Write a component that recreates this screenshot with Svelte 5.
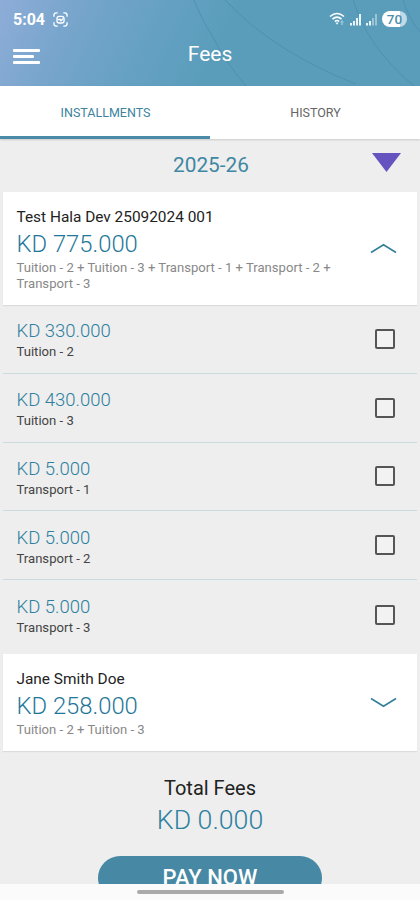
<script lang="ts">
	interface Installment {
		amount: string;
		label: string;
		selected: boolean;
	}

	let year = $state('2025-26');
	let activeTab = $state('Installments');
	let expanded = $state(true);

	const tabs = ['Installments', 'History'];

	let installments: Installment[] = $state([
		{ amount: '330.000', label: 'Tuition - 2', selected: false },
		{ amount: '430.000', label: 'Tuition - 3', selected: false },
		{ amount: '5.000', label: 'Transport - 1', selected: false },
		{ amount: '5.000', label: 'Transport - 2', selected: false },
		{ amount: '5.000', label: 'Transport - 3', selected: false }
	]);

	const total = $derived(
		installments.reduce((sum, i) => sum + (i.selected ? Number(i.amount) : 0), 0)
	);
</script>

<div class="screen">
	<header>
		<svg class="arcs" viewBox="0 0 420 86" aria-hidden="true">
			<path d="M194 0 Q204 24 210 32 Q228 66 246 86" />
			<path d="M225 0 Q274 52 356 84" />
			<path d="M353 0 Q368 48 414 86" />
			<path d="M403 0 Q409 19 420 32" />
		</svg>
		<div class="status">
			<span class="clock">5:04</span>
			<svg class="capture" width="15" height="15" viewBox="0 0 16 16">
				<path d="M1 5V3.500Q1 1 3.500 1H5M11 1h1.500Q15 1 15 3.500V5M15 11v1.500Q15 15 12.500 15H11M5 15H3.500Q1 15 1 12.500V11" />
				<rect x="4.200" y="4.700" width="7.600" height="7" rx="2.500" />
				<path d="M5 8h2.500l1 1.300L11 7" />
			</svg>
			<div class="signals">
				<svg width="17" height="14" viewBox="0 0 17 14">
					<path class="wave" d="M1 4.500Q8 -1.500 15 4.500M3.500 7.200Q8 3 12.500 7.200M5.800 9.500Q8 7.500 10.200 9.500" />
					<path class="solid" d="M6.300 10.500h3.400L8 12.800z" />
					<path class="solid dim" d="M13 8l2 2.500h-1.200V13h-1.600v-2.500H11z" />
				</svg>
				<svg width="12" height="13" viewBox="0 0 12 13">
					<path class="solid" d="M0 10h2v2.500H0zM3 8h2v4.500H3zM6 5h2v7.500H6zM9 1h2v11.500H9z" />
				</svg>
				<svg width="12" height="13" viewBox="0 0 12 13">
					<path class="solid" d="M0 10h2v2.500H0zM3 8h2v4.500H3z" />
					<path class="solid dim" d="M6 5h2v7.500H6zM9 1h2v11.500H9z" />
				</svg>
				<span class="battery">70</span>
			</div>
		</div>
		<div class="title-bar">
			<button class="menu" aria-label="Menu">
				<i></i>
				<i class="short"></i>
				<i></i>
			</button>
			<h1>Fees</h1>
		</div>
	</header>

	<nav>
		{#each tabs as tab}
			<button class:active={activeTab === tab} onclick={() => (activeTab = tab)}>{tab}</button>
		{/each}
	</nav>

	<main>
		<div class="year">
			<span>{year}</span>
			<svg width="29" height="19" viewBox="0 0 29 19">
				<path d="M0 0h29L14.500 19z" />
			</svg>
		</div>

		<section class="card first">
			<div class="info">
				<div class="name">Test Hala Dev 25092024 001</div>
				<div class="sum">KD 775.000</div>
				<p>Tuition - 2 + Tuition - 3 + Transport - 1 + Transport - 2 + Transport - 3</p>
			</div>
			<button class="toggle" aria-label="Toggle installments" onclick={() => (expanded = !expanded)}>
				<svg width="27" height="11" viewBox="0 0 27 11"><path d="M1 9.500L13.500 1.800L26 9.500" /></svg>
			</button>
		</section>

		{#if expanded}
			<ul>
				{#each installments as item}
					<li>
						<div>
							<div class="amount">KD {item.amount}</div>
							<div class="label">{item.label}</div>
						</div>
						<input type="checkbox" bind:checked={item.selected} aria-label={item.label} />
					</li>
				{/each}
			</ul>
		{/if}

		<section class="card second">
			<div class="info">
				<div class="name">Jane Smith Doe</div>
				<div class="sum">KD 258.000</div>
				<p>Tuition - 2 + Tuition - 3</p>
			</div>
			<button class="toggle" aria-label="Toggle installments">
				<svg width="27" height="11" viewBox="0 0 27 11"><path d="M1 1.500L13.500 9.200L26 1.500" /></svg>
			</button>
		</section>

		<div class="total">
			<div class="total-label">Total Fees</div>
			<div class="total-sum">KD {total.toFixed(3)}</div>
			<button class="pay">PAY NOW</button>
		</div>
	</main>

	<footer><i></i></footer>
</div>

<style>
	:global(body) {
		background: #eee;
	}
	.screen {
		display: flex;
		flex-direction: column;
		width: 420px;
		height: 900px;
		overflow: hidden;
		background: #eeeeee;
		font-family: Roboto, 'Liberation Sans', sans-serif;
		color: #222;
	}
	button {
		padding: 0;
		border: 0;
		background: none;
		font: inherit;
		color: inherit;
	}
	svg {
		display: block;
		fill: none;
	}
	header {
		position: relative;
		flex: none;
		height: 86px;
		background: linear-gradient(115deg, #8eadd8 0%, #78a5cc 17%, #67a1c4 34%, #5a9dbb 52%, #5a9dbb 100%);
		color: #fff;
	}
	.arcs {
		position: absolute;
		inset: 0;
		stroke: #4788aa;
		stroke-width: 1;
		opacity: 0.6;
	}
	.status {
		position: relative;
		display: flex;
		align-items: center;
		height: 38px;
		padding: 0 13px 0 13px;
	}
	.clock {
		width: 40px;
		font-size: 16px;
		font-weight: 700;
	}
	.capture {
		stroke: #fff;
		stroke-width: 1.4;
	}
	.signals {
		display: flex;
		align-items: center;
		gap: 4px;
		margin-left: auto;
	}
	.wave {
		stroke: #fff;
		stroke-width: 1.6;
	}
	.solid {
		fill: #eaf3f7;
	}
	.dim {
		opacity: 0.45;
	}
	.battery {
		width: 25px;
		border-radius: 8px;
		background: linear-gradient(90deg, #fff 72%, #c2dae6 72%);
		font-size: 13.5px;
		font-weight: 500;
		line-height: 16px;
		text-align: center;
		color: #4c8fae;
	}
	.title-bar {
		position: relative;
		display: grid;
		grid-template-columns: 1fr auto 1fr;
		align-items: center;
		height: 36px;
		padding: 0 13px;
	}
	.menu {
		display: flex;
		flex-direction: column;
		gap: 3px;
		padding-top: 1px;
	}
	.menu i {
		width: 27px;
		height: 3px;
		border-radius: 1px;
		background: #fff;
	}
	.menu .short {
		width: 21px;
	}
	h1 {
		margin: 0 0 4px;
		font-size: 21px;
		font-weight: 400;
		line-height: 32px;
	}
	nav {
		display: flex;
		flex: none;
		height: 53px;
		background: #fff;
		box-shadow: 0 1px 2px rgba(0, 0, 0, 0.15);
		z-index: 1;
	}
	nav button {
		flex: 1;
		padding: 3px 0 0 1px;
		border-bottom: 3px solid transparent;
		font-size: 12.5px;
		text-transform: uppercase;
		color: #666;
	}
	nav .active {
		border-color: #4a8ba7;
		color: #3d839d;
	}
	main {
		flex: 1;
		min-height: 0;
		overflow: hidden;
	}
	.year {
		display: flex;
		align-items: center;
		justify-content: center;
		height: 53px;
		font-size: 20.8px;
		color: #3f87a3;
	}
	.year span {
		margin: -2px auto 0 173px;
	}
	.year svg {
		margin: -6px 19px 0 0;
		fill: #6554c0;
	}
	.card {
		display: flex;
		justify-content: space-between;
		margin: 0 3px;
		padding: 0 20px 0 13.5px;
		background: #fff;
		box-shadow: 0 1px 1px rgba(0, 0, 0, 0.08);
	}
	.first {
		height: 113px;
	}
	.second {
		height: 97px;
	}
	.info {
		width: 325px;
		padding-top: 16px;
	}
	.name {
		font-size: 15.4px;
		line-height: 19px;
	}
	.sum {
		margin-top: 4px;
		font-size: 23.8px;
		font-weight: 300;
		line-height: 27px;
		color: #1f7799;
	}
	p {
		margin: 2px 0 0;
		font-size: 13.1px;
		line-height: 16px;
		color: #888;
	}
	.toggle {
		align-self: center;
	}
	.toggle svg {
		stroke: #347f99;
		stroke-width: 1.6;
	}
	.second svg {
		margin-top: 1px;
	}
	ul {
		margin: 0 3px;
		padding: 0;
		list-style: none;
	}
	li {
		display: flex;
		align-items: center;
		justify-content: space-between;
		box-sizing: border-box;
		height: 68.8px;
		padding: 2px 22.5px 0 13.5px;
		border-bottom: 1.5px solid #cbdadd;
	}
	li:last-child {
		height: 73.8px;
		padding-bottom: 5px;
		border: 0;
	}
	.amount {
		padding-top: 2px;
		font-size: 18.5px;
		font-weight: 300;
		line-height: 22px;
		color: #2c80a0;
	}
	.label {
		font-size: 13.1px;
		line-height: 19px;
		color: #444;
	}
	input {
		appearance: none;
		width: 20px;
		height: 20px;
		margin: 0 0 2px;
		border: 2px solid #555;
		border-radius: 2px;
		background: #f2f2f2;
	}
	input:checked {
		background: #4a8ba7;
	}
	.total {
		display: flex;
		flex-direction: column;
		align-items: center;
		padding-top: 25px;
	}
	.total-label {
		font-size: 20px;
		line-height: 24px;
	}
	.total-sum {
		margin-top: 4px;
		font-size: 26.7px;
		font-weight: 300;
		line-height: 32px;
		color: #2c80a0;
	}
	.pay {
		width: 224px;
		height: 44px;
		margin-top: 20px;
		border-radius: 22px;
		background: #4788a5;
		font-size: 22px;
		font-weight: 500;
		color: #fff;
	}
	footer {
		display: flex;
		flex: none;
		justify-content: center;
		align-items: center;
		height: 16px;
		background: #fbfbfb;
	}
	footer i {
		width: 147px;
		height: 4px;
		border-radius: 2px;
		background: #aaa;
	}
</style>
